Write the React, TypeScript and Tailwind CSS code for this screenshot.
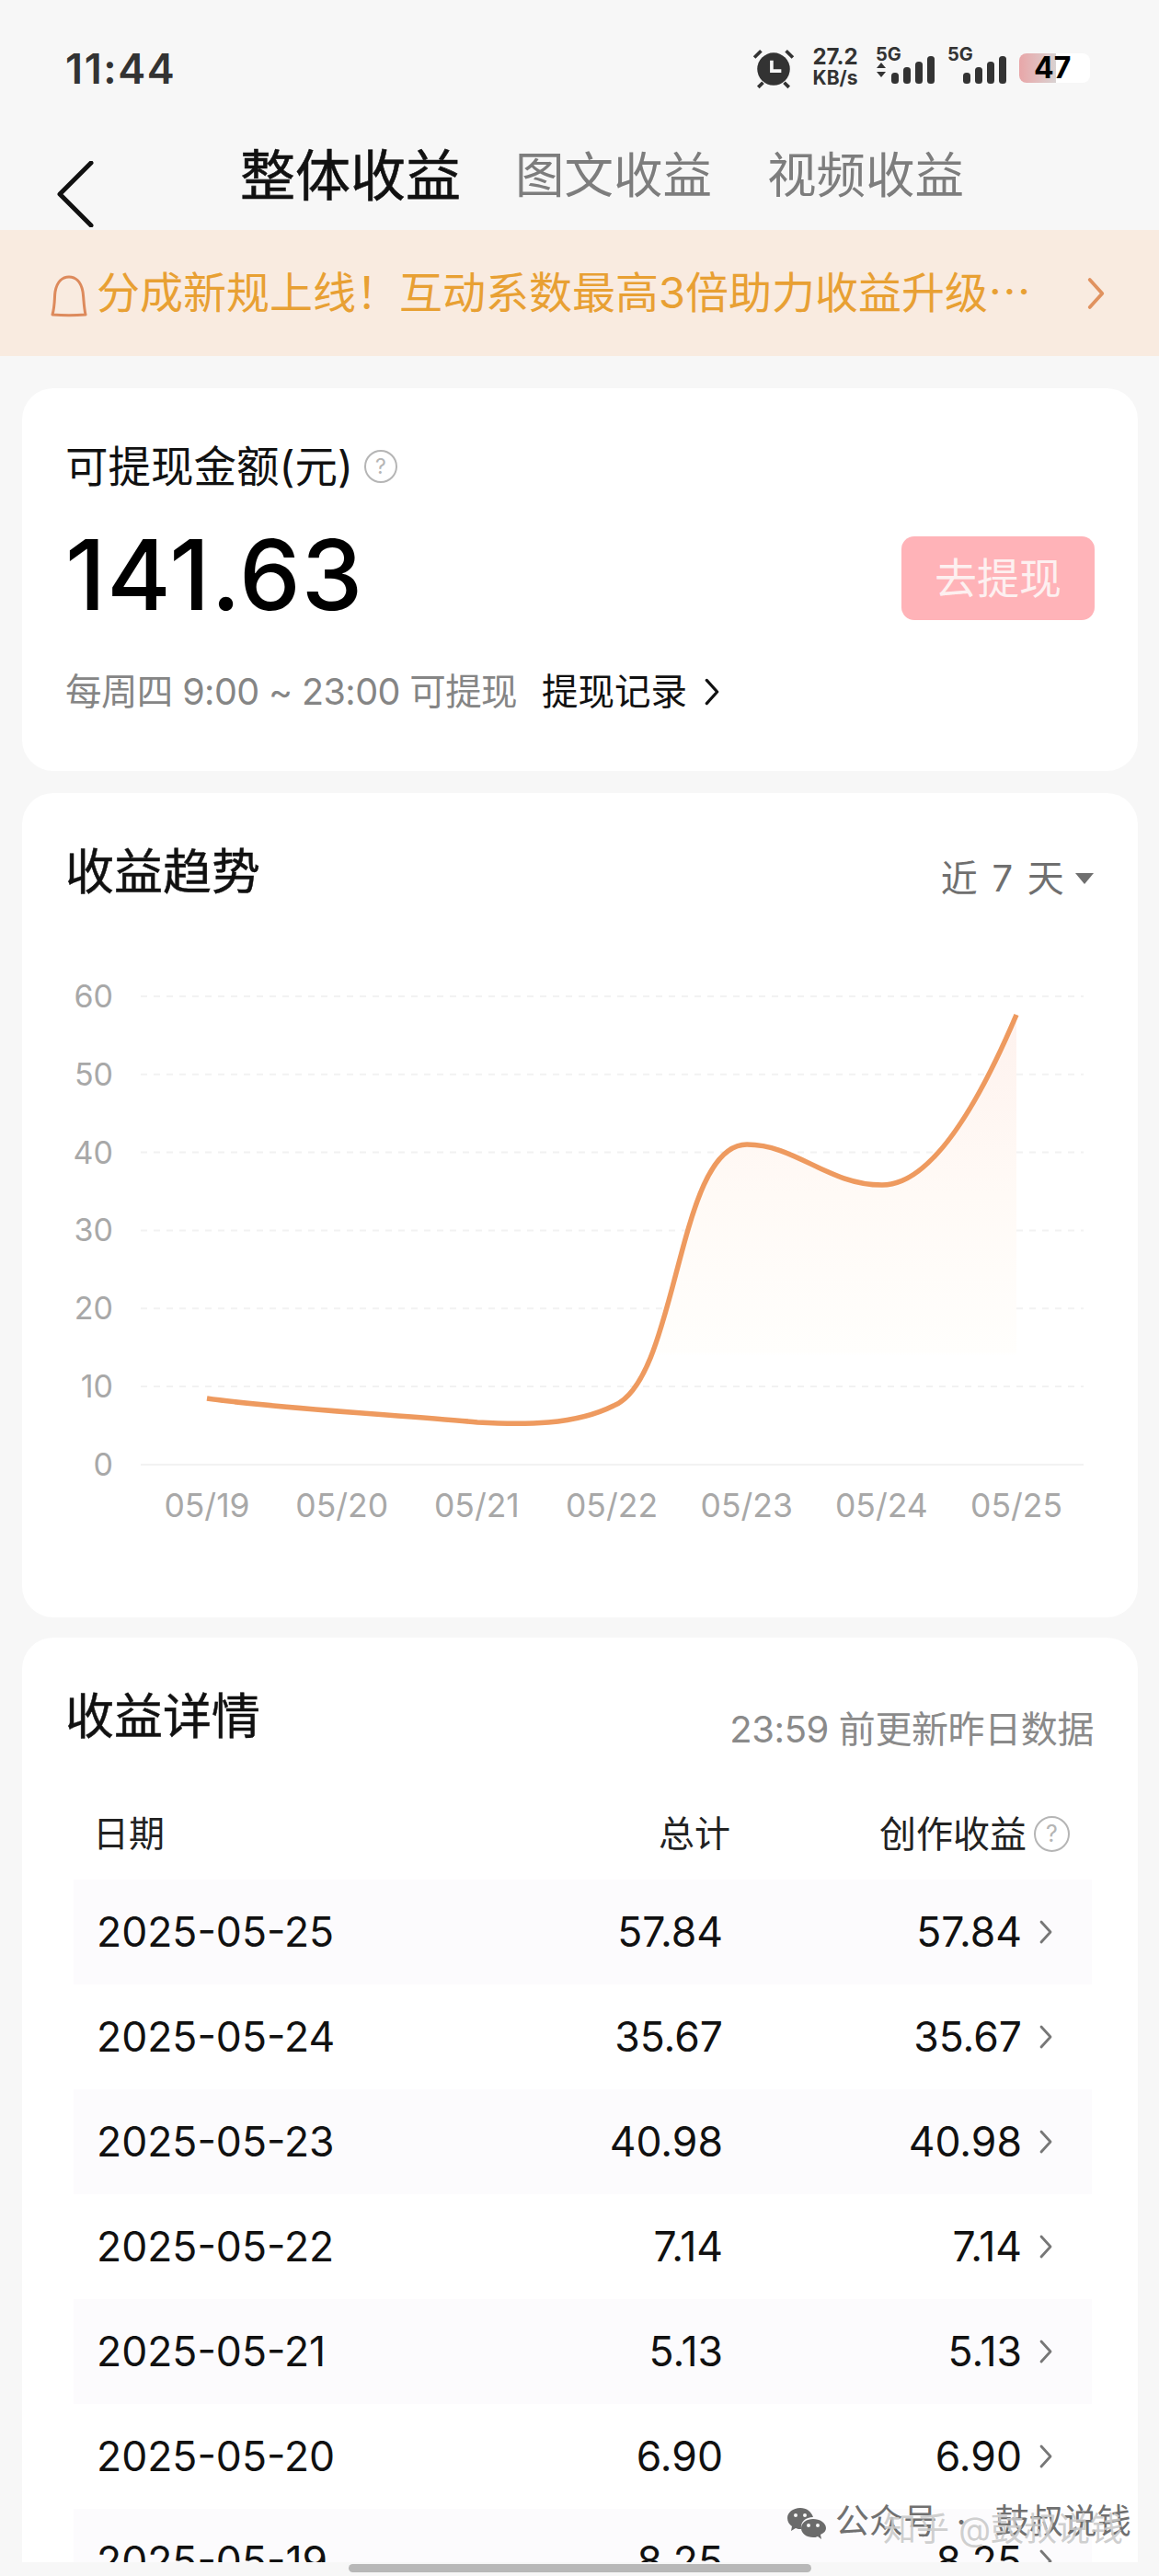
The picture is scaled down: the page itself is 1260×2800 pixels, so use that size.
import React from "react";

const rows = [
  ["2025-05-25", "57.84"],
  ["2025-05-24", "35.67"],
  ["2025-05-23", "40.98"],
  ["2025-05-22", "7.14"],
  ["2025-05-21", "5.13"],
  ["2025-05-20", "6.90"],
  ["2025-05-19", "8.25"],
];

const yTicks = [60, 50, 40, 30, 20, 10];
const xTicks = ["05/19", "05/20", "05/21", "05/22", "05/23", "05/24", "05/25"];

const curve =
  "M225 1520 C300 1531 450 1539 519 1546 C570 1549 625 1549 667 1528 C738 1500 735 1244 812 1244 C865 1244 900 1288 959 1288 C1010 1288 1060 1209 1105 1103";

function Chevron({ className }: { className: string }) {
  return (
    <svg viewBox="0 0 14 26" fill="none" className={className}>
      <path d="M2 2 L12 13 L2 24" stroke="currentColor" strokeWidth="2.8" strokeLinecap="round" strokeLinejoin="round" />
    </svg>
  );
}

function Help({ className }: { className: string }) {
  return (
    <span className={`flex items-center justify-center rounded-full border-2 border-[#b5b5b5] text-[#b5b5b5] font-[Inter,sans-serif] ${className}`}>
      ?
    </span>
  );
}

function Signal({ arrows }: { arrows?: boolean }) {
  return (
    <svg viewBox="0 0 64 30" className="w-[64px] h-[30px]" fill="#333333">
      {arrows && <path d="M1 13 L6 7 L11 13 Z M1 17 L6 23 L11 17 Z" />}
      <rect x="17" y="18" width="8" height="12" rx="3.5" />
      <rect x="30" y="12" width="8" height="18" rx="3.5" />
      <rect x="43" y="6" width="8" height="24" rx="3.5" />
      <rect x="56" y="0" width="8" height="30" rx="3.5" />
    </svg>
  );
}

function StatusBar() {
  return (
    <div className="h-[130px] flex items-start justify-between pl-[71px] pr-[75px] pt-[50px] text-[#333333]">
      <span className="text-[45px] leading-[50px] font-semibold tracking-[1.6px]">11:44</span>
      <div className="flex items-start">
        <svg viewBox="0 0 44 44" className="w-[46px] h-[46px] mt-[1px] -ml-[4px]">
          <circle cx="22" cy="23" r="17" fill="#333333" />
          <path d="M20 14 V25 H30" stroke="#f7f7f7" strokeWidth="3.5" fill="none" />
          <path d="M2 11 L9 4 M42 11 L35 4 M6 42 L11 37 M38 42 L33 37" stroke="#333333" strokeWidth="3.5" />
        </svg>
        <div className="ml-[14px] w-[60px] flex flex-col font-bold text-center">
          <span className="text-[24px] leading-[24px]">27.2</span>
          <span className="text-[21px] leading-[22px]">KB/s</span>
        </div>
        <div className="ml-[14px] w-[64px] flex flex-col">
          <span className="text-[20px] leading-[18px] font-bold">5G</span>
          <div className="-mt-[7px]">
            <Signal arrows />
          </div>
        </div>
        <div className="ml-[14px] w-[64px] flex flex-col">
          <span className="text-[20px] leading-[18px] font-bold">5G</span>
          <div className="-mt-[7px]">
            <Signal />
          </div>
        </div>
        <div className="ml-[14px] mt-[8px] relative w-[77px] h-[32px] rounded-[8px] bg-white flex items-center">
          <div className="h-full w-[40px] rounded-l-[8px] bg-gradient-to-r from-[#e8a6a8] to-[#d8d2d2]" />
          <span className="absolute left-[16px] text-[32px] leading-[32px] font-bold text-black">47</span>
        </div>
      </div>
    </div>
  );
}

function TabBar() {
  return (
    <div className="h-[120px] flex items-start pl-[62px]">
      <svg viewBox="0 0 40 72" fill="none" className="w-[40px] h-[72px] mt-[45px]">
        <path d="M37 2 L3 36 L37 70" stroke="#111111" strokeWidth="5" strokeLinecap="round" strokeLinejoin="round" />
      </svg>
      <div className="ml-[159px] h-[120px] flex items-center pt-[2px]">
        <span className="text-[60px] text-[#111111] [-webkit-text-stroke:0.6px_#111111]">整体收益</span>
        <span className="ml-[59px] text-[53.5px] text-[#7d7d7d]">图文收益</span>
        <span className="ml-[60px] text-[53.5px] text-[#7d7d7d]">视频收益</span>
      </div>
    </div>
  );
}

function Banner() {
  return (
    <div className="h-[137px] bg-[#f9ebe0] flex items-center pl-[54px] pr-[59px] text-[#e8a033]">
      <svg viewBox="0 0 42 46" fill="none" className="w-[42px] h-[46px] shrink-0 mt-[6px]">
        <path d="M3 43 C6 32 5 24 6 18 C8 7 14 2 21 2 C28 2 34 7 36 18 C37 24 37 34 39 43 C28 44 14 44 3 43 Z" stroke="#dd8a5c" strokeWidth="3" strokeLinejoin="round" />
      </svg>
      <span className="ml-[9px] text-[47px] whitespace-nowrap">分成新规上线！互动系数最高3倍助力收益升级⋯</span>
      <Chevron className="ml-auto w-[19px] h-[36px] text-[#e0925f]" />
    </div>
  );
}

function BalanceCard() {
  return (
    <section className="h-[416px] bg-white rounded-[34px] relative pt-[60px] pl-[47px] pr-[48px]">
      <div className="flex items-center h-[50px] text-[#111111]">
        <span className="text-[46.5px] leading-[50px]">可提现金额(元)</span>
        <Help className="ml-[12px] w-[36px] h-[36px] text-[23px]" />
      </div>
      <div className="mt-[51px] flex items-center justify-between h-[91px]">
        <span className="-mt-[8px] text-[106px] leading-[91px] font-medium text-black tracking-[1.2px]">141.63</span>
        <button className="w-[210px] h-[91px] rounded-[14px] bg-[#ffb3b8] text-[46px] text-[#fdf0f0] -mr-[1px]">去提现</button>
      </div>
      <div className="mt-[53px] flex items-center text-[39.5px] leading-[50px]">
        <span className="text-[#858585] tracking-[-0.6px]">每周四 9:00 ~ 23:00 可提现</span>
        <span className="ml-[27px] text-[#111111]">提现记录</span>
        <Chevron className="ml-[19px] w-[16px] h-[30px] text-[#111111]" />
      </div>
    </section>
  );
}

function TrendChart() {
  return (
    <svg viewBox="24 1040 1213 718" className="w-[1213px] h-[718px] block" fontFamily="Inter, sans-serif">
      <defs>
        <linearGradient id="area" x1="0" y1="0" x2="0" y2="1">
          <stop offset="0" stopColor="#fef2ee" />
          <stop offset="0.4" stopColor="#fffaf6" />
          <stop offset="0.75" stopColor="#fffefc" />
          <stop offset="0.76" stopColor="#ffffff" stopOpacity="0" />
        </linearGradient>
      </defs>
      {yTicks.map((v, i) => (
        <line key={v} x1="153" x2="1178" y1={1083 + i * 84.8} y2={1083 + i * 84.8} stroke="#f2f2f2" strokeWidth="2" strokeDasharray="7 7" />
      ))}
      <line x1="153" x2="1178" y1="1592" y2="1592" stroke="#f2f2f2" strokeWidth="2" />
      {[...yTicks, 0].map((v, i) => (
        <text key={v} x="123" y={1095 + i * 84.8} textAnchor="end" fontSize="34" fill="#a8a8a8">
          {v}
        </text>
      ))}
      {xTicks.map((t, i) => (
        <text key={t} x={225 + i * 146.67} y="1649" textAnchor="middle" fontSize="35.5" fill="#a8a8a8">
          {t}
        </text>
      ))}
      <path d={`${curve} L1105 1592 L225 1592 Z`} fill="url(#area)" />
      <path d={curve} fill="none" stroke="#ee9a5f" strokeWidth="5.5" />
    </svg>
  );
}

function TrendCard() {
  return (
    <section className="mt-[24px] h-[896px] bg-white rounded-[34px] overflow-hidden">
      <div className="h-[178px] pl-[47px] pr-[48px] pt-[50px] flex items-start justify-between">
        <span className="text-[53px] leading-[72px] text-[#111111] [-webkit-text-stroke:0.5px_#111111]">收益趋势</span>
        <div className="mt-[16px] flex items-center text-[#6f6f6f]">
          <span className="text-[40px] leading-[54px] whitespace-pre tracking-[2.2px]">近 7 天</span>
          <span className="ml-[10px] w-0 h-0 border-x-[10px] border-x-transparent border-t-[12px] border-t-[#6f6f6f]" />
        </div>
      </div>
      <TrendChart />
    </section>
  );
}

function DetailCard() {
  return (
    <section className="mt-[22px] h-[1005px] bg-white rounded-t-[34px] overflow-hidden pl-[56px] pr-[50px]">
      <div className="h-[104px] -ml-[9px] mr-[-2px] pt-[50px] flex items-start justify-between">
        <span className="text-[53px] leading-[72px] text-[#111111] [-webkit-text-stroke:0.5px_#111111]">收益详情</span>
        <span className="mt-[22px] text-[40px] leading-[56px] text-[#8a8a8a] tracking-[-0.4px]">23:59 前更新昨日数据</span>
      </div>
      <div className="h-[159px] flex items-center text-[#222222] text-[39px] pl-[21px] pt-[60px]">
        <span>日期</span>
        <span className="ml-auto">总计</span>
        <span className="ml-[162px] text-[40px]">创作收益</span>
        <Help className="ml-[8px] mr-[24px] w-[39px] h-[39px] text-[25px]" />
      </div>
      {rows.map(([date, amount], i) => (
        <div key={date} className={`h-[114px] flex items-center pl-[25px] text-[#111111] text-[44.5px] ${i % 2 === 0 ? "bg-[#fcfbfd]" : "bg-white"}`}>
          <span className="w-[300px]">{date}</span>
          <span className="w-[381px] text-right">{amount}</span>
          <span className="w-[325px] text-right">{amount}</span>
          <Chevron className="ml-[19px] w-[14px] h-[30px] text-[#777777]" />
        </div>
      ))}
    </section>
  );
}

function Watermark() {
  return (
    <div className="absolute left-[855px] top-[2722px] w-[390px] h-[66px]">
      <svg viewBox="0 0 44 40" className="absolute left-0 top-[3px] w-[44px] h-[40px]" fill="#6b6b6b">
        <path d="M15 1 C7 1 1 6 1 12 C1 16 3 19 6 21 L5 26 L10 23 C12 24 14 24 16 24 C15 16 21 11 29 11 C27 5 22 1 15 1 Z" />
        <path d="M29 13 C22 13 16 17 16 23 C16 29 22 33 29 33 C31 33 32 33 34 32 L38 35 L37 30 C41 28 43 26 43 23 C43 17 36 13 29 13 Z" />
        <circle cx="10" cy="9" r="2" fill="#f7f7f7" />
        <circle cx="20" cy="9" r="2" fill="#f7f7f7" />
        <circle cx="24" cy="20" r="2" fill="#f7f7f7" />
        <circle cx="34" cy="20" r="2" fill="#f7f7f7" />
      </svg>
      <span className="absolute left-[53px] -top-[3px] text-[37px] leading-[44px] text-[#707070] whitespace-pre">公众号  ·   鼓叔说钱</span>
      <span className="absolute left-[105px] top-[5px] text-[36px] leading-[44px] text-[#c9c9c9]/90 whitespace-nowrap">知乎 @鼓叔说钱</span>
    </div>
  );
}

export default function App() {
  return (
    <div className="relative w-[1260px] h-[2800px] overflow-hidden bg-[#f7f7f7] font-[Inter,'Noto_Sans_CJK_SC',sans-serif] flex flex-col">
      <StatusBar />
      <TabBar />
      <Banner />
      <main className="h-[2398px] overflow-hidden pt-[35px] pl-[24px] pr-[23px]">
        <BalanceCard />
        <TrendCard />
        <DetailCard />
      </main>
      <div className="h-[15px] flex justify-center pt-[2px]">
        <div className="w-[503px] h-[9px] rounded-full bg-[#b8b8b8]" />
      </div>
      <Watermark />
    </div>
  );
}
